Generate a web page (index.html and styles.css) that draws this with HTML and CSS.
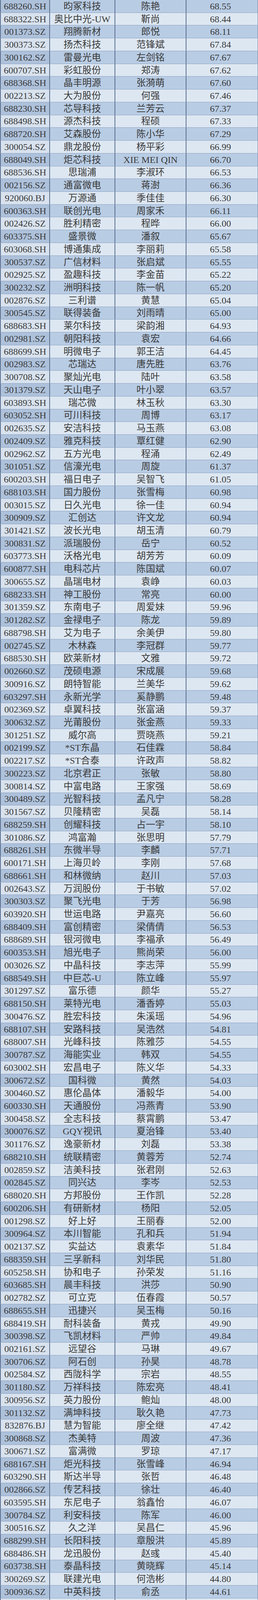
FILE: index.html
```html
<!DOCTYPE html>
<html lang="zh-CN">
<head>
<meta charset="utf-8">
<title>表格</title>
<link rel="stylesheet" href="styles.css">
</head>
<body>
<div class="sheet">
<div class="row"><span>688260.SH</span><span>昀冢科技</span><span>陈艳</span><span>68.55</span></div>
<div class="row"><span>688322.SH</span><span>奥比中光-UW</span><span>靳尚</span><span>68.44</span></div>
<div class="row"><span>001373.SZ</span><span>翔腾新材</span><span>郎悦</span><span>68.11</span></div>
<div class="row"><span>300373.SZ</span><span>扬杰科技</span><span>范锋斌</span><span>67.84</span></div>
<div class="row"><span>300162.SZ</span><span>雷曼光电</span><span>左剑铭</span><span>67.67</span></div>
<div class="row"><span>600707.SH</span><span>彩虹股份</span><span>郑涛</span><span>67.62</span></div>
<div class="row"><span>688368.SH</span><span>晶丰明源</span><span>张漪萌</span><span>67.60</span></div>
<div class="row"><span>002213.SZ</span><span>大为股份</span><span>何强</span><span>67.46</span></div>
<div class="row"><span>688230.SH</span><span>芯导科技</span><span>兰芳云</span><span>67.37</span></div>
<div class="row"><span>688498.SH</span><span>源杰科技</span><span>程硕</span><span>67.33</span></div>
<div class="row"><span>688720.SH</span><span>艾森股份</span><span>陈小华</span><span>67.29</span></div>
<div class="row"><span>300054.SZ</span><span>鼎龙股份</span><span>杨平彩</span><span>66.99</span></div>
<div class="row"><span>688049.SH</span><span>炬芯科技</span><span>XIE MEI QIN</span><span>66.70</span></div>
<div class="row"><span>688536.SH</span><span>思瑞浦</span><span>李淑环</span><span>66.53</span></div>
<div class="row"><span>002156.SZ</span><span>通富微电</span><span>蒋澍</span><span>66.36</span></div>
<div class="row"><span>920060.BJ</span><span>万源通</span><span>季佳佳</span><span>66.30</span></div>
<div class="row"><span>600363.SH</span><span>联创光电</span><span>周家禾</span><span>66.11</span></div>
<div class="row"><span>002426.SZ</span><span>胜利精密</span><span>程晔</span><span>66.00</span></div>
<div class="row"><span>603375.SH</span><span>盛景微</span><span>潘叙</span><span>65.67</span></div>
<div class="row"><span>603068.SH</span><span>博通集成</span><span>李丽莉</span><span>65.58</span></div>
<div class="row"><span>300537.SZ</span><span>广信材料</span><span>张启斌</span><span>65.55</span></div>
<div class="row"><span>002925.SZ</span><span>盈趣科技</span><span>李金苗</span><span>65.22</span></div>
<div class="row"><span>300232.SZ</span><span>洲明科技</span><span>陈一帆</span><span>65.20</span></div>
<div class="row"><span>002876.SZ</span><span>三利谱</span><span>黄慧</span><span>65.04</span></div>
<div class="row"><span>300545.SZ</span><span>联得装备</span><span>刘雨晴</span><span>65.00</span></div>
<div class="row"><span>688683.SH</span><span>莱尔科技</span><span>梁韵湘</span><span>64.93</span></div>
<div class="row"><span>002981.SZ</span><span>朝阳科技</span><span>袁宏</span><span>64.66</span></div>
<div class="row"><span>688699.SH</span><span>明微电子</span><span>郭王洁</span><span>64.45</span></div>
<div class="row"><span>002983.SZ</span><span>芯瑞达</span><span>唐先胜</span><span>63.76</span></div>
<div class="row"><span>300708.SZ</span><span>聚灿光电</span><span>陆叶</span><span>63.58</span></div>
<div class="row"><span>301379.SZ</span><span>天山电子</span><span>叶小翠</span><span>63.57</span></div>
<div class="row"><span>603893.SH</span><span>瑞芯微</span><span>林玉秋</span><span>63.30</span></div>
<div class="row"><span>603052.SH</span><span>可川科技</span><span>周博</span><span>63.17</span></div>
<div class="row"><span>002635.SZ</span><span>安洁科技</span><span>马玉燕</span><span>63.08</span></div>
<div class="row"><span>002409.SZ</span><span>雅克科技</span><span>覃红健</span><span>62.90</span></div>
<div class="row"><span>002962.SZ</span><span>五方光电</span><span>程涌</span><span>62.49</span></div>
<div class="row"><span>301051.SZ</span><span>信濠光电</span><span>周旋</span><span>61.37</span></div>
<div class="row"><span>600203.SH</span><span>福日电子</span><span>吴智飞</span><span>61.05</span></div>
<div class="row"><span>688103.SH</span><span>国力股份</span><span>张雪梅</span><span>60.98</span></div>
<div class="row"><span>003015.SZ</span><span>日久光电</span><span>徐一佳</span><span>60.94</span></div>
<div class="row"><span>300909.SZ</span><span>汇创达</span><span>许文龙</span><span>60.94</span></div>
<div class="row"><span>301421.SZ</span><span>波长光电</span><span>胡玉清</span><span>60.79</span></div>
<div class="row"><span>300831.SZ</span><span>派瑞股份</span><span>岳宁</span><span>60.52</span></div>
<div class="row"><span>603773.SH</span><span>沃格光电</span><span>胡芳芳</span><span>60.09</span></div>
<div class="row"><span>600877.SH</span><span>电科芯片</span><span>陈国斌</span><span>60.07</span></div>
<div class="row"><span>300655.SZ</span><span>晶瑞电材</span><span>袁峥</span><span>60.03</span></div>
<div class="row"><span>688233.SH</span><span>神工股份</span><span>常亮</span><span>60.00</span></div>
<div class="row"><span>301359.SZ</span><span>东南电子</span><span>周爱妹</span><span>59.96</span></div>
<div class="row"><span>301282.SZ</span><span>金禄电子</span><span>陈龙</span><span>59.89</span></div>
<div class="row"><span>688798.SH</span><span>艾为电子</span><span>余美伊</span><span>59.80</span></div>
<div class="row"><span>002745.SZ</span><span>木林森</span><span>李冠群</span><span>59.77</span></div>
<div class="row"><span>688530.SH</span><span>欧莱新材</span><span>文雅</span><span>59.72</span></div>
<div class="row"><span>002660.SZ</span><span>茂硕电源</span><span>宋成展</span><span>59.68</span></div>
<div class="row"><span>300916.SZ</span><span>朗特智能</span><span>兰美华</span><span>59.62</span></div>
<div class="row"><span>603297.SH</span><span>永新光学</span><span>奚静鹏</span><span>59.48</span></div>
<div class="row"><span>002369.SZ</span><span>卓翼科技</span><span>张富涵</span><span>59.37</span></div>
<div class="row"><span>300632.SZ</span><span>光莆股份</span><span>张金燕</span><span>59.33</span></div>
<div class="row"><span>301251.SZ</span><span>威尔高</span><span>贾晓燕</span><span>59.21</span></div>
<div class="row"><span>002199.SZ</span><span>*ST东晶</span><span>石佳霖</span><span>58.84</span></div>
<div class="row"><span>002217.SZ</span><span>*ST合泰</span><span>许政声</span><span>58.82</span></div>
<div class="row"><span>300223.SZ</span><span>北京君正</span><span>张敏</span><span>58.80</span></div>
<div class="row"><span>300814.SZ</span><span>中富电路</span><span>王家强</span><span>58.69</span></div>
<div class="row"><span>300489.SZ</span><span>光智科技</span><span>孟凡宁</span><span>58.28</span></div>
<div class="row"><span>301567.SZ</span><span>贝隆精密</span><span>吴磊</span><span>58.14</span></div>
<div class="row"><span>688259.SH</span><span>创耀科技</span><span>占一宇</span><span>58.10</span></div>
<div class="row"><span>301086.SZ</span><span>鸿富瀚</span><span>张思明</span><span>57.79</span></div>
<div class="row"><span>688261.SH</span><span>东微半导</span><span>李麟</span><span>57.71</span></div>
<div class="row"><span>600171.SH</span><span>上海贝岭</span><span>李刚</span><span>57.68</span></div>
<div class="row"><span>688661.SH</span><span>和林微纳</span><span>赵川</span><span>57.03</span></div>
<div class="row"><span>002643.SZ</span><span>万润股份</span><span>于书敏</span><span>57.02</span></div>
<div class="row"><span>300303.SZ</span><span>聚飞光电</span><span>于芳</span><span>56.98</span></div>
<div class="row"><span>603920.SH</span><span>世运电路</span><span>尹嘉亮</span><span>56.60</span></div>
<div class="row"><span>688409.SH</span><span>富创精密</span><span>梁倩倩</span><span>56.53</span></div>
<div class="row"><span>688689.SH</span><span>银河微电</span><span>李福承</span><span>56.49</span></div>
<div class="row"><span>600353.SH</span><span>旭光电子</span><span>熊尚荣</span><span>56.00</span></div>
<div class="row"><span>003026.SZ</span><span>中晶科技</span><span>李志萍</span><span>55.99</span></div>
<div class="row"><span>688549.SH</span><span>中巨芯-U</span><span>陈立峰</span><span>55.97</span></div>
<div class="row"><span>301297.SZ</span><span>富乐德</span><span>颜华</span><span>55.27</span></div>
<div class="row"><span>688150.SH</span><span>莱特光电</span><span>潘香婷</span><span>55.03</span></div>
<div class="row"><span>300476.SZ</span><span>胜宏科技</span><span>朱溪瑶</span><span>54.96</span></div>
<div class="row"><span>688107.SH</span><span>安路科技</span><span>吴浩然</span><span>54.81</span></div>
<div class="row"><span>688007.SH</span><span>光峰科技</span><span>陈雅莎</span><span>54.55</span></div>
<div class="row"><span>300787.SZ</span><span>海能实业</span><span>韩双</span><span>54.55</span></div>
<div class="row"><span>603002.SH</span><span>宏昌电子</span><span>陈义华</span><span>54.33</span></div>
<div class="row"><span>300672.SZ</span><span>国科微</span><span>黄然</span><span>54.03</span></div>
<div class="row"><span>300460.SZ</span><span>惠伦晶体</span><span>潘毅华</span><span>54.00</span></div>
<div class="row"><span>600330.SH</span><span>天通股份</span><span>冯燕青</span><span>53.90</span></div>
<div class="row"><span>300458.SZ</span><span>全志科技</span><span>蔡霄鹏</span><span>53.47</span></div>
<div class="row"><span>300076.SZ</span><span>GQY视讯</span><span>夏治锋</span><span>53.40</span></div>
<div class="row"><span>301176.SZ</span><span>逸豪新材</span><span>刘磊</span><span>53.38</span></div>
<div class="row"><span>688210.SH</span><span>统联精密</span><span>黄蓉芳</span><span>52.74</span></div>
<div class="row"><span>002859.SZ</span><span>洁美科技</span><span>张君刚</span><span>52.63</span></div>
<div class="row"><span>002845.SZ</span><span>同兴达</span><span>李岑</span><span>52.53</span></div>
<div class="row"><span>688020.SH</span><span>方邦股份</span><span>王作凯</span><span>52.28</span></div>
<div class="row"><span>600206.SH</span><span>有研新材</span><span>杨阳</span><span>52.05</span></div>
<div class="row"><span>001298.SZ</span><span>好上好</span><span>王丽春</span><span>52.00</span></div>
<div class="row"><span>300964.SZ</span><span>本川智能</span><span>孔和兵</span><span>51.94</span></div>
<div class="row"><span>002137.SZ</span><span>实益达</span><span>袁素华</span><span>51.84</span></div>
<div class="row"><span>688359.SH</span><span>三孚新科</span><span>刘华民</span><span>51.80</span></div>
<div class="row"><span>605258.SH</span><span>协和电子</span><span>孙荣发</span><span>51.16</span></div>
<div class="row"><span>603685.SH</span><span>晨丰科技</span><span>洪莎</span><span>50.90</span></div>
<div class="row"><span>002782.SZ</span><span>可立克</span><span>伍春霞</span><span>50.57</span></div>
<div class="row"><span>688655.SH</span><span>迅捷兴</span><span>吴玉梅</span><span>50.16</span></div>
<div class="row"><span>688419.SH</span><span>耐科装备</span><span>黄戎</span><span>49.90</span></div>
<div class="row"><span>300398.SZ</span><span>飞凯材料</span><span>严帅</span><span>49.84</span></div>
<div class="row"><span>002161.SZ</span><span>远望谷</span><span>马琳</span><span>49.67</span></div>
<div class="row"><span>300706.SZ</span><span>阿石创</span><span>孙昊</span><span>48.78</span></div>
<div class="row"><span>002584.SZ</span><span>西陇科学</span><span>宗岩</span><span>48.55</span></div>
<div class="row"><span>301180.SZ</span><span>万祥科技</span><span>陈宏亮</span><span>48.41</span></div>
<div class="row"><span>300956.SZ</span><span>英力股份</span><span>鲍灿</span><span>48.00</span></div>
<div class="row"><span>301132.SZ</span><span>满坤科技</span><span>耿久艳</span><span>47.73</span></div>
<div class="row"><span>832876.BJ</span><span>慧为智能</span><span>廖全继</span><span>47.42</span></div>
<div class="row"><span>300868.SZ</span><span>杰美特</span><span>周波</span><span>47.36</span></div>
<div class="row"><span>300671.SZ</span><span>富满微</span><span>罗琼</span><span>47.17</span></div>
<div class="row"><span>688167.SH</span><span>炬光科技</span><span>张雪峰</span><span>46.94</span></div>
<div class="row"><span>603290.SH</span><span>斯达半导</span><span>张哲</span><span>46.48</span></div>
<div class="row"><span>002866.SZ</span><span>传艺科技</span><span>徐壮</span><span>46.40</span></div>
<div class="row"><span>603595.SH</span><span>东尼电子</span><span>翁鑫怡</span><span>46.07</span></div>
<div class="row"><span>300784.SZ</span><span>利安科技</span><span>陈军</span><span>46.00</span></div>
<div class="row"><span>300516.SZ</span><span>久之洋</span><span>吴昌仁</span><span>45.96</span></div>
<div class="row"><span>688299.SH</span><span>长阳科技</span><span>章殷洪</span><span>45.89</span></div>
<div class="row"><span>688486.SH</span><span>龙迅股份</span><span>赵彧</span><span>45.40</span></div>
<div class="row"><span>603738.SH</span><span>泰晶科技</span><span>黄晓辉</span><span>45.14</span></div>
<div class="row"><span>300269.SZ</span><span>联建光电</span><span>何浩彬</span><span>44.80</span></div>
<div class="row"><span>300936.SZ</span><span>中英科技</span><span>俞丞</span><span>44.61</span></div>
<div class="row"><span>837821.BJ</span><span>则成电子</span><span>魏斌</span><span>44.52</span></div>
<div class="row"><span>300481.SZ</span><span>濮阳惠成</span><span>陈淑敏</span><span>44.40</span></div>
<div class="row"><span>688403.SH</span><span>汇成股份</span><span>奚勰</span><span>44.26</span></div>
<div class="row"><span>688519.SH</span><span>南亚新材</span><span>张柳</span><span>44.20</span></div>
<div class="row"><span>002138.SZ</span><span>顺络电子</span><span>任怡</span><span>44.00</span></div>
<div class="row"><span>603186.SH</span><span>华正新材</span><span>祝郁文</span><span>43.79</span></div>
<div class="row"><span>002130.SZ</span><span>沃尔核材</span><span>邱微</span><span>43.55</span></div>
<div class="row"><span>603936.SH</span><span>博敏电子</span><span>黄晓丹</span><span>43.28</span></div>
<div class="row"><span>002885.SZ</span><span>京泉华</span><span>曹文智</span><span>43.02</span></div>
<div class="row"><span>688279.SH</span><span>峰岹科技</span><span>焦倩倩</span><span>42.68</span></div>
<div class="row"><span>688378.SH</span><span>奥来德</span><span>郑宇</span><span>41.94</span></div>
<div class="row"><span>301189.SZ</span><span>奥尼电子</span><span>叶勇</span><span>41.82</span></div>
<div class="row"><span>301031.SZ</span><span>中熔电气</span><span>刘冰</span><span>41.22</span></div>
<div class="row"><span>301067.SZ</span><span>显盈科技</span><span>陈立</span><span>40.47</span></div>
<div class="row"><span>688496.SH</span><span>清越科技</span><span>毕晨亮</span><span>40.03</span></div>
<div class="row"><span>300843.SZ</span><span>胜蓝股份</span><span>许立各</span><span>39.84</span></div>
<div class="row"><span>301387.SZ</span><span>光大同创</span><span>占梦昀</span><span>39.51</span></div>
<div class="row"><span>688416.SH</span><span>恒烁股份</span><span>周晓芳</span><span>39.39</span></div>
<div class="row"><span>301321.SZ</span><span>翰博高新</span><span>潘大圣</span><span>39.34</span></div>
<div class="row"><span>300120.SZ</span><span>经纬辉开</span><span>刘冬梅</span><span>39.30</span></div>
<div class="row"><span>300046.SZ</span><span>台基股份</span><span>康进</span><span>39.05</span></div>
<div class="row"><span>301389.SZ</span><span>隆扬电子</span><span>金卫勤</span><span>38.54</span></div>
<div class="row"><span>688620.SH</span><span>安凯微</span><span>李瑾懿</span><span>38.14</span></div>
<div class="row"><span>688589.SH</span><span>力合微</span><span>夏镔</span><span>38.13</span></div>
<div class="row"><span>002861.SZ</span><span>瀛通通讯</span><span>罗炯波</span><span>37.60</span></div>
<div class="row"><span>300991.SZ</span><span>创益通</span><span>彭治江</span><span>37.28</span></div>
<div class="row"><span>300812.SZ</span><span>易天股份</span><span>王亚丽</span><span>37.23</span></div>
<div class="row"><span>688127.SH</span><span>蓝特光学</span><span>郑斌杰</span><span>36.73</span></div>
<div class="row"><span>300857.SZ</span><span>协创数据</span><span>甘杏</span><span>36.48</span></div>
<div class="row"><span>688502.SH</span><span>茂莱光学</span><span>鲍洱</span><span>36.41</span></div>
<div class="row"><span>603629.SH</span><span>利通电子</span><span>施佶</span><span>36.36</span></div>
<div class="row"><span>688010.SH</span><span>福光股份</span><span>黄健</span><span>36.27</span></div>
<div class="row"><span>300793.SZ</span><span>佳禾智能</span><span>夏平</span><span>36.00</span></div>
<div class="row"><span>300822.SZ</span><span>贝仕达克</span><span>方颖娇</span><span>35.84</span></div>
<div class="row"><span>688678.SH</span><span>福立旺</span><span>尤洞察</span><span>35.47</span></div>
<div class="row"><span>603989.SH</span><span>艾华集团</span><span>艾燕</span><span>35.17</span></div>
<div class="row"><span>831167.BJ</span><span>鑫汇科</span><span>张聪</span><span>34.74</span></div>
<div class="row"><span>300968.SZ</span><span>格林精密</span><span>白国昌</span><span>34.74</span></div>
<div class="row"><span>833346.BJ</span><span>威贸电子</span><span>周威迪</span><span>34.56</span></div>
<div class="row"><span>301045.SZ</span><span>天禄科技</span><span>肖明冬</span><span>34.40</span></div>
<div class="row"><span>301041.SZ</span><span>金百泽</span><span>陈鹏飞</span><span>34.23</span></div>
<div class="row"><span>688079.SH</span><span>美迪凯</span><span>王懿伟</span><span>33.99</span></div>
<div class="row"><span>002922.SZ</span><span>伊戈尔</span><span>梁伦商</span><span>33.88</span></div>
<div class="row"><span>688662.SH</span><span>富信科技</span><span>田泉</span><span>33.81</span></div>
<div class="row"><span>301489.SZ</span><span>思泉新材</span><span>郭智超</span><span>33.68</span></div>
<div class="row"><span>000020.SZ</span><span>深华发A</span><span>牛卓</span><span>33.60</span></div>
<div class="row"><span>301123.SZ</span><span>奕东电子</span><span>谢张</span><span>33.52</span></div>
</div>
</body>
</html>
```

FILE: styles.css
```css
html, body {
  margin: 0;
  padding: 0;
  background: #dde7f2;
}

.sheet {
  width: 660px;
  display: block;
  font-family: "Liberation Serif", "Noto Sans CJK SC", serif;
  font-size: 24px;
  color: #3a3a3a;
}

.row {
  height: 32.74px;
  overflow: hidden;
  display: grid;
  grid-template-columns: 128px 167px 182px 183px;
  grid-template-rows: 100%;
  box-sizing: border-box;
  border-bottom: 1px solid #8ca1be;
  background: #dde7f2;
}

.row:nth-child(odd) {
  background: #b8cce4;
}

.row > span {
  display: flex;
  align-items: center;
  justify-content: center;
  white-space: nowrap;
  overflow: hidden;
  border-right: 2px solid #5b6f8f;
  line-height: 24px;
}

.row > span:first-child {
  border-left: 2px solid #5b6f8f;
  background: #d8e2ee;
}

.row:nth-child(odd) > span:first-child {
  background: #adc1db;
}

.row > span:last-child {
  border-right: 1px solid #6f83a2;
  padding-right: 8px;
}
```
